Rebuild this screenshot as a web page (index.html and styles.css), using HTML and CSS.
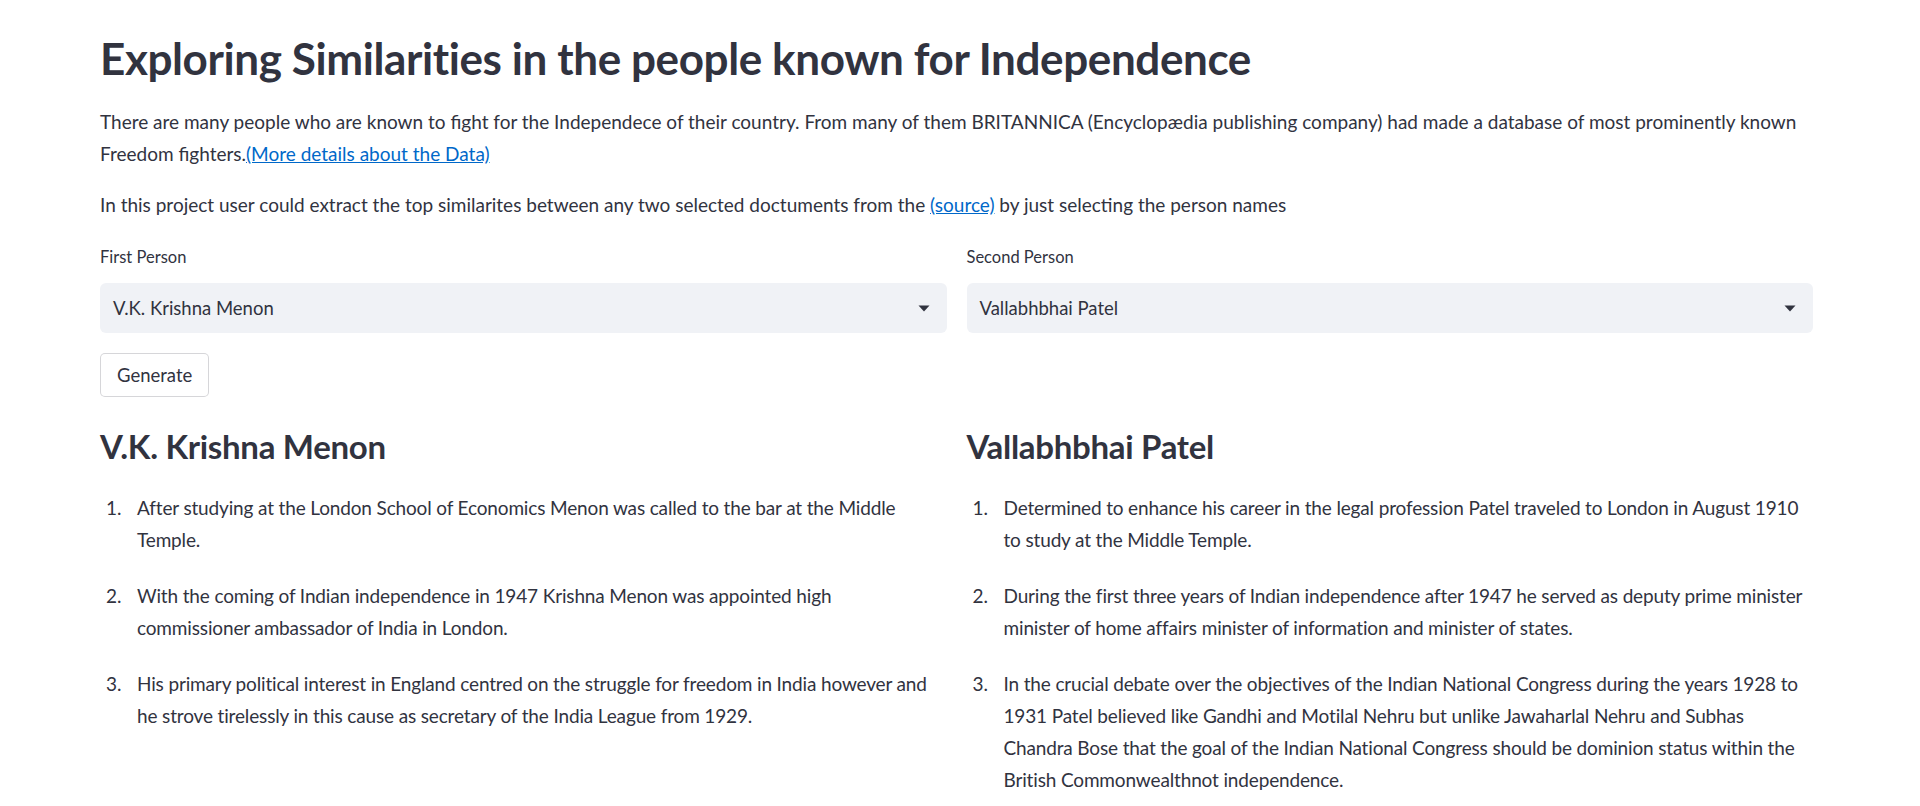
FILE: index.html
```html
<!DOCTYPE html>
<html lang="en">
<head>
<meta charset="utf-8">
<title>Exploring Similarities</title>
<link rel="stylesheet" href="styles.css">
</head>
<body>
<main class="app">
  <h1 class="title">Exploring Similarities in the people known for Independence</h1>
  <p class="para">There are many people who are known to fight for the Independece of their country. From many of them BRITANNICA (Encyclopædia publishing company) had made a database of most prominently known Freedom fighters.<a class="link" href="#">(More details about the Data)</a></p>
  <p class="para">In this project user could extract the top similarites between any two selected doctuments from the <a class="link" href="#">(source)</a> by just selecting the person names</p>

  <div class="cols">
    <div class="col">
      <label class="label">First Person</label>
      <div class="select">
        <span class="select-value">V.K. Krishna Menon</span>
        <svg class="arrow" width="12" height="7" viewBox="0 0 12 7"><path d="M0.5 0.5h11L6 6.5z" fill="#31333F"/></svg>
      </div>
    </div>
    <div class="col">
      <label class="label">Second Person</label>
      <div class="select">
        <span class="select-value">Vallabhbhai Patel</span>
        <svg class="arrow" width="12" height="7" viewBox="0 0 12 7"><path d="M0.5 0.5h11L6 6.5z" fill="#31333F"/></svg>
      </div>
    </div>
  </div>

  <button class="btn" type="button">Generate</button>

  <div class="cols results">
    <div class="col">
      <h2 class="name">V.K. Krishna Menon</h2>
      <ol class="list">
        <li>After studying at the London School of Economics Menon was called to the bar at the Middle Temple.</li>
        <li>With the coming of Indian independence in 1947 Krishna Menon was appointed high commissioner ambassador of India in London.</li>
        <li>His primary political interest in England centred on the struggle for freedom in India however and he strove tirelessly in this cause as secretary of the India League from 1929.</li>
      </ol>
    </div>
    <div class="col">
      <h2 class="name">Vallabhbhai Patel</h2>
      <ol class="list">
        <li>Determined to enhance his career in the legal profession Patel traveled to London in August 1910 to study at the Middle Temple.</li>
        <li>During the first three years of Indian independence after 1947 he served as deputy prime minister minister of home affairs minister of information and minister of states.</li>
        <li>In the crucial debate over the objectives of the Indian National Congress during the years 1928 to 1931 Patel believed like Gandhi and Motilal Nehru but unlike Jawaharlal Nehru and Subhas Chandra Bose that the goal of the Indian National Congress should be dominion status within the British Commonwealthnot independence.</li>
      </ol>
    </div>
  </div>
</main>
</body>
</html>
```

FILE: styles.css
```css
html, body {
  margin: 0;
  padding: 0;
  background: #ffffff;
}

body {
  font-family: "Lato", "Liberation Sans", sans-serif;
  color: #31333F;
  font-size: 19px;
  line-height: 32px;
}

.app {
  width: 1713px;
  padding: 31px 0 0 100px;
}

.title {
  margin: 0 0 21px 0;
  font-size: 44px;
  line-height: 54px;
  font-weight: 700;
  letter-spacing: -0.4px;
}

.para {
  margin: 0 0 19px 0;
}

.link {
  color: #0068C9;
  text-decoration: underline;
}

.cols {
  display: flex;
  gap: 20px;
}

.col {
  flex: 1 1 0;
  min-width: 0;
}

.label {
  display: block;
  font-size: 16.5px;
  line-height: 28px;
  margin: 3px 0 12px 0;
}

.select {
  height: 50px;
  background: #F0F2F6;
  border-radius: 6px;
  display: flex;
  align-items: center;
  justify-content: space-between;
  padding: 0 17px 0 13px;
  box-sizing: border-box;
}

.select-value {
  font-size: 18.5px;
  line-height: 24px;
}

.arrow {
  display: block;
}

.btn {
  display: block;
  margin-top: 20px;
  height: 44px;
  padding: 0 16px;
  background: #ffffff;
  border: 1px solid rgba(49, 51, 63, 0.2);
  border-radius: 5px;
  font-family: inherit;
  font-size: 18.5px;
  color: #31333F;
}

.results {
  margin-top: 28px;
}

.name {
  margin: 0 0 25px 0;
  font-size: 33px;
  line-height: 42px;
  font-weight: 700;
  letter-spacing: -0.3px;
}

.list {
  list-style: none;
  margin: 0;
  padding: 0;
  counter-reset: item;
  letter-spacing: -0.15px;
}

.list li {
  display: flex;
  margin-bottom: 24px;
  counter-increment: item;
}

.list li::before {
  content: counter(item) ".";
  flex: none;
  width: 31px;
  padding-left: 6px;
}
```
